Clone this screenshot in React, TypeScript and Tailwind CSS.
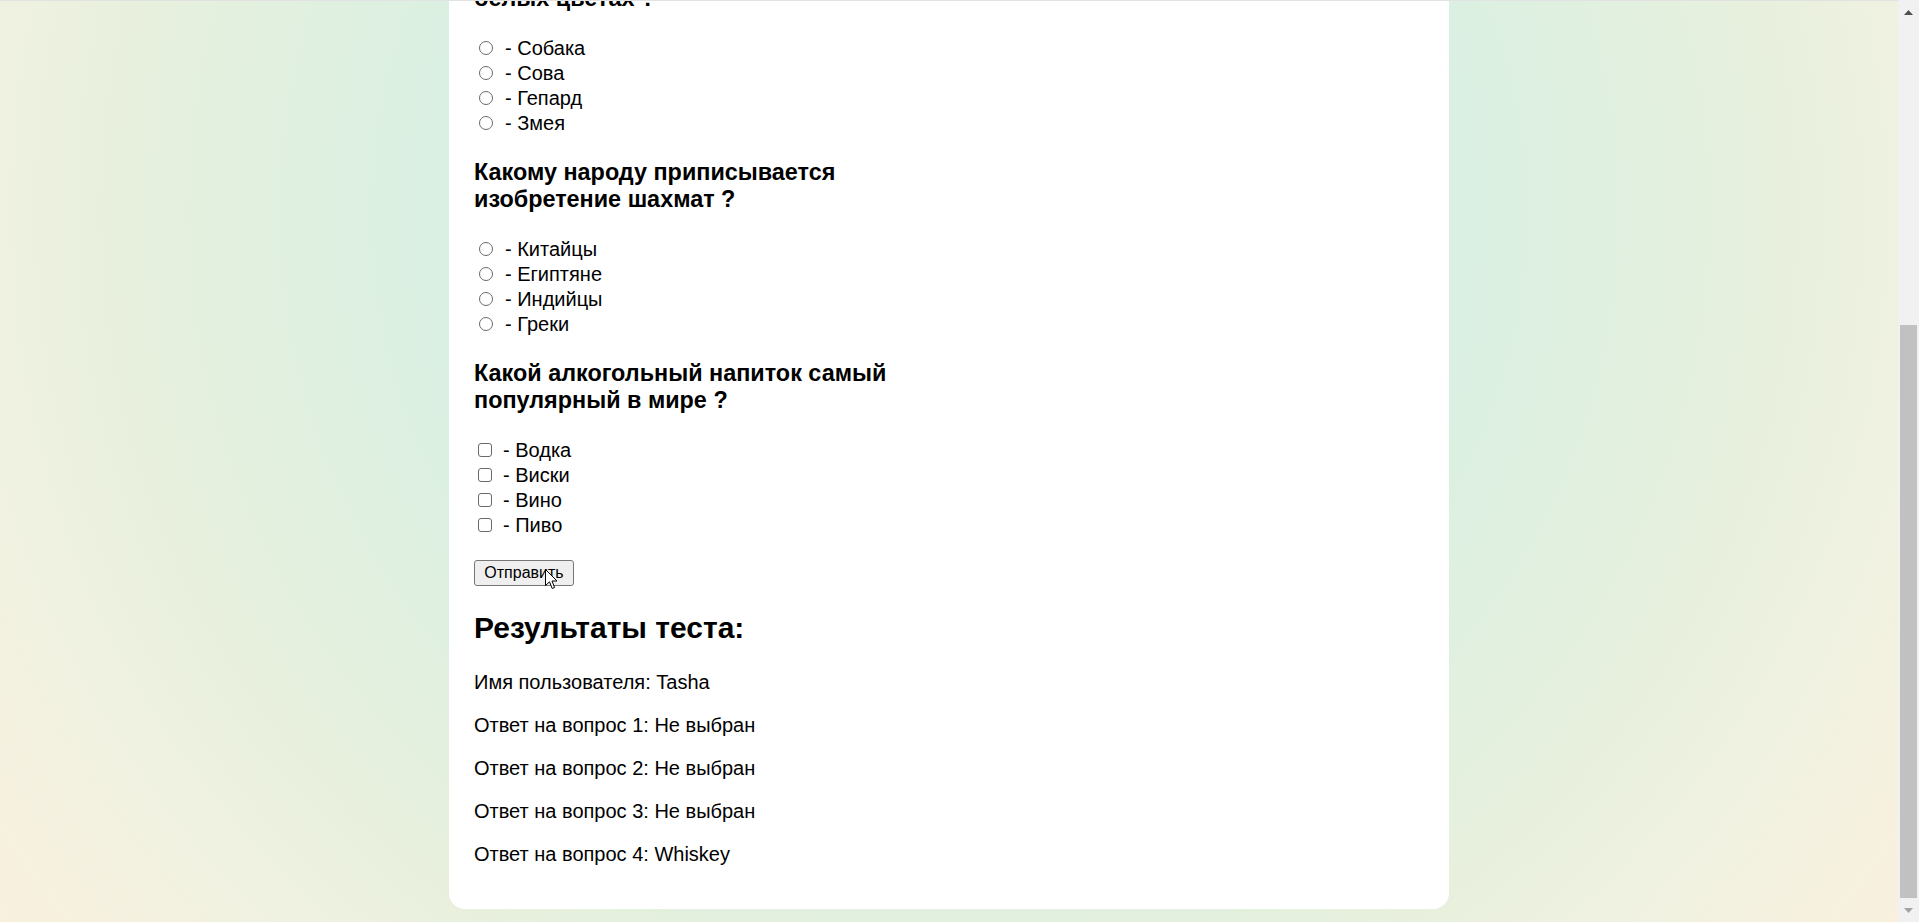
import { ChangeEvent, useState } from 'react';

interface Question {
  id: string;
  title: string[];
  type: 'radio' | 'checkbox';
  options: string[];
}

const questions: Question[] = [
  {
    id: 'q3',
    title: ['Какому народу приписывается', 'изобретение шахмат ?'],
    type: 'radio',
    options: ['Китайцы', 'Египтяне', 'Индийцы', 'Греки'],
  },
  {
    id: 'q4',
    title: ['Какой алкогольный напиток самый', 'популярный в мире ?'],
    type: 'checkbox',
    options: ['Водка', 'Виски', 'Вино', 'Пиво'],
  },
];

const results = [
  'Имя пользователя: Tasha',
  'Ответ на вопрос 1: Не выбран',
  'Ответ на вопрос 2: Не выбран',
  'Ответ на вопрос 3: Не выбран',
  'Ответ на вопрос 4: Whiskey',
];

function OptionRow({
  name,
  type,
  label,
  onChange,
}: {
  name: string;
  type: 'radio' | 'checkbox';
  label: string;
  onChange?: (e: ChangeEvent<HTMLInputElement>) => void;
}) {
  return (
    <label className="block h-[25px] leading-[25px] text-[20px] whitespace-nowrap">
      <input
        type={type}
        name={name}
        value={label}
        onChange={onChange}
        className={
          type === 'radio'
            ? 'appearance-none align-baseline inline-block w-[14px] h-[14px] ml-[5px] mr-[3px] rounded-full border border-[#6a6a6a] bg-white checked:border-[4px] checked:border-[#0075ff]'
            : 'appearance-none align-baseline inline-block w-[14px] h-[14px] ml-[4px] mr-[3px] rounded-[3px] border border-[#6a6a6a] bg-white checked:bg-[#0075ff] checked:border-[#0075ff]'
        }
      />
      <span className={type === 'radio' ? 'ml-[9px]' : 'ml-[8px]'}>- {label}</span>
    </label>
  );
}

function Scrollbar() {
  return (
    <div className="w-[21px] shrink-0 h-full flex flex-col bg-[#f1f1f1]">
      <div className="h-[24px] flex items-center justify-center">
        <svg width="9" height="5" viewBox="0 0 9 5">
          <polygon points="4.5,0 9,5 0,5" fill="#505050" />
        </svg>
      </div>
      <div className="flex-1" />
      <div className="h-[573px] mx-[2px] bg-[#c1c1c1]" />
      <div className="h-[24px] flex items-center justify-center">
        <svg width="9" height="5" viewBox="0 0 9 5">
          <polygon points="0,0 9,0 4.5,5" fill="#a3a3a3" />
        </svg>
      </div>
    </div>
  );
}

export default function App() {
  const [answers, setAnswers] = useState<Record<string, string>>({});

  const pick = (e: ChangeEvent<HTMLInputElement>) =>
    setAnswers({ ...answers, [e.target.name]: e.target.value });

  return (
    <div className="h-[922px] w-full overflow-hidden flex font-['Liberation_Sans',Arial,sans-serif] text-black">
      <main className="flex-1 min-h-0 overflow-hidden flex flex-col justify-end items-center pb-[13px] border-t border-[#e2e2e2] bg-[radial-gradient(circle_at_50%_23%,#d6efe3_0%,#daf0e2_44%,#e8f0dd_71%,#f0f2e1_82%,#f9f0de_100%)]">
        <div className="w-[1000px] shrink-0 bg-white rounded-2xl pl-[25px] pr-[26px] pt-[26px] pb-[43px] flex flex-col items-start">
          <h3 className="w-[470px] text-[23.4px] leading-[27px] font-bold">
            Какое животное чаще всего рисуют в черно-
            <br />
            белых цветах ?
          </h3>
          <div className="mt-[24px]">
            {['Собака', 'Сова', 'Гепард', 'Змея'].map((o) => (
              <OptionRow key={o} name="q2" type="radio" label={o} onChange={pick} />
            ))}
          </div>

          {questions.map((q) => (
            <div key={q.id} className="mt-[23px]">
              <h3 className="w-[470px] text-[23.4px] leading-[27px] font-bold">
                {q.title[0]}
                <br />
                {q.title[1]}
              </h3>
              <div className="mt-[24px]">
                {q.options.map((o) => (
                  <OptionRow
                    key={o}
                    name={q.type === 'radio' ? q.id : `${q.id}-${o}`}
                    type={q.type}
                    label={o}
                    onChange={pick}
                  />
                ))}
              </div>
            </div>
          ))}

          <div className="relative mt-[22px]">
            <button
              type="button"
              className="h-[26px] w-[100px] border border-[#767676] bg-[#efefef] rounded-[3px] text-[16px] leading-none text-black"
              onClick={() => setAnswers({ ...answers })}
            >
              Отправить
            </button>
            <svg
              className="absolute left-[71px] top-[9px] pointer-events-none"
              width="13"
              height="21"
              viewBox="0 0 13 21"
            >
              <path
                d="M0.5 0.5 L0.5 16.5 L4.5 12.8 L7.2 19.5 L9.6 18.5 L7 12 L12 12 Z"
                fill="#ffffff"
                stroke="#000000"
                strokeWidth="1"
                strokeLinejoin="round"
              />
            </svg>
          </div>

          <h2 className="mt-[25px] text-[30px] leading-[34px] font-bold">Результаты теста:</h2>
          <div className="mt-[26px] flex flex-col gap-[20px]">
            {results.map((r) => (
              <p key={r} className="text-[20px] leading-[23px]">
                {r}
              </p>
            ))}
          </div>
        </div>
      </main>
      <Scrollbar />
    </div>
  );
}
